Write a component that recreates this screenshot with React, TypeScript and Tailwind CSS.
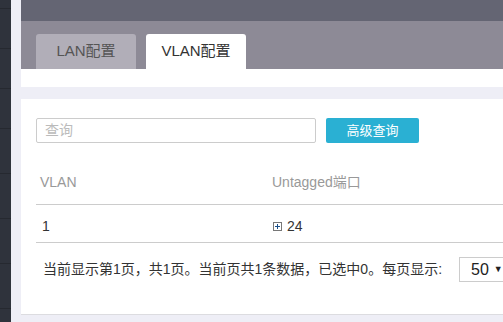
const sideLines = [9, 40, 40, 40, 45, 45, 45, 45];

function PlusBox() {
  return (
    <svg width="9" height="9" viewBox="0 0 9 9" className="shrink-0">
      <rect x="0.5" y="0.5" width="8" height="8" fill="#fff" stroke="#777" />
      <path d="M2 4.5h5M4.5 2v5" stroke="#1a4f8a" strokeWidth="1" />
    </svg>
  );
}

export default function App() {
  return (
    <div
      className="flex w-[503px] h-[322px] overflow-hidden bg-[#eeeef6]"
      style={{ fontFamily: '"Liberation Sans", "Noto Sans CJK SC", sans-serif' }}
    >
      <div className="w-[11px] shrink-0 bg-[#2f333c] flex flex-col">
        {sideLines.map((h, i) => (
          <div key={i} className="border-b border-[#262930]" style={{ height: h }} />
        ))}
      </div>
      <div className="w-[10px] shrink-0" />

      <div className="flex-1 min-w-0 flex flex-col">
        <div className="h-[21px] bg-[#646573]" />
        <div className="h-[48px] bg-[#8d8a96] flex items-end gap-[10px] pl-[15px]">
          <div className="w-[100px] h-[35px] rounded-t-[3px] bg-[#b1aeb8] flex items-center justify-center text-[15px] text-[#555]">
            LAN配置
          </div>
          <div className="w-[100px] h-[35px] rounded-t-[3px] bg-white flex items-center justify-center text-[15px] text-[#333]">
            VLAN配置
          </div>
        </div>
        <div className="h-[18px] bg-white" />
        <div className="h-[12px]" />

        <div className="bg-white border-b border-[#dcdce0] pl-[15px] pt-[19px] pb-[32px] w-[520px]">
          <div className="flex gap-[10px] h-[25px]">
            <div className="w-[280px] h-[25px] border border-[#ccc] rounded-[2px] flex items-center pl-[8px] text-[14px] text-[#bbb]">
              查询
            </div>
            <div className="w-[93px] h-[25px] bg-[#2ab0d3] rounded-[2px] flex items-center justify-center text-[13px] text-white">
              高级查询
            </div>
          </div>

          <div className="mt-[17px]">
            <div className="flex h-[45px] items-center border-b border-[#ccc] pt-[1px] text-[14px] text-[#999]">
              <div className="w-[232px] pl-[4px]">VLAN</div>
              <div className="pl-[4px]">Untagged端口</div>
            </div>
            <div className="flex h-[38px] items-center border-b border-[#ccc] pt-[5px] text-[14px] text-[#333]">
              <div className="w-[232px] pl-[6px]">1</div>
              <div className="pl-[5px] flex items-center gap-[5px]">
                <PlusBox />
                <span>24</span>
              </div>
            </div>
          </div>

          <div className="mt-[14px] h-[25px] flex items-center pl-[7px] gap-[17px]">
            <span className="text-[14px] text-[#333] whitespace-nowrap">
              当前显示第1页，共1页。当前页共1条数据，已选中0。每页显示:
            </span>
            <div className="w-[56px] h-[25px] border border-[#ccc] flex items-center pl-[11px] gap-[5px] text-[16px] text-[#222]">
              <span>50</span>
              <span className="text-[9px]">▼</span>
            </div>
          </div>
        </div>
      </div>
    </div>
  );
}
